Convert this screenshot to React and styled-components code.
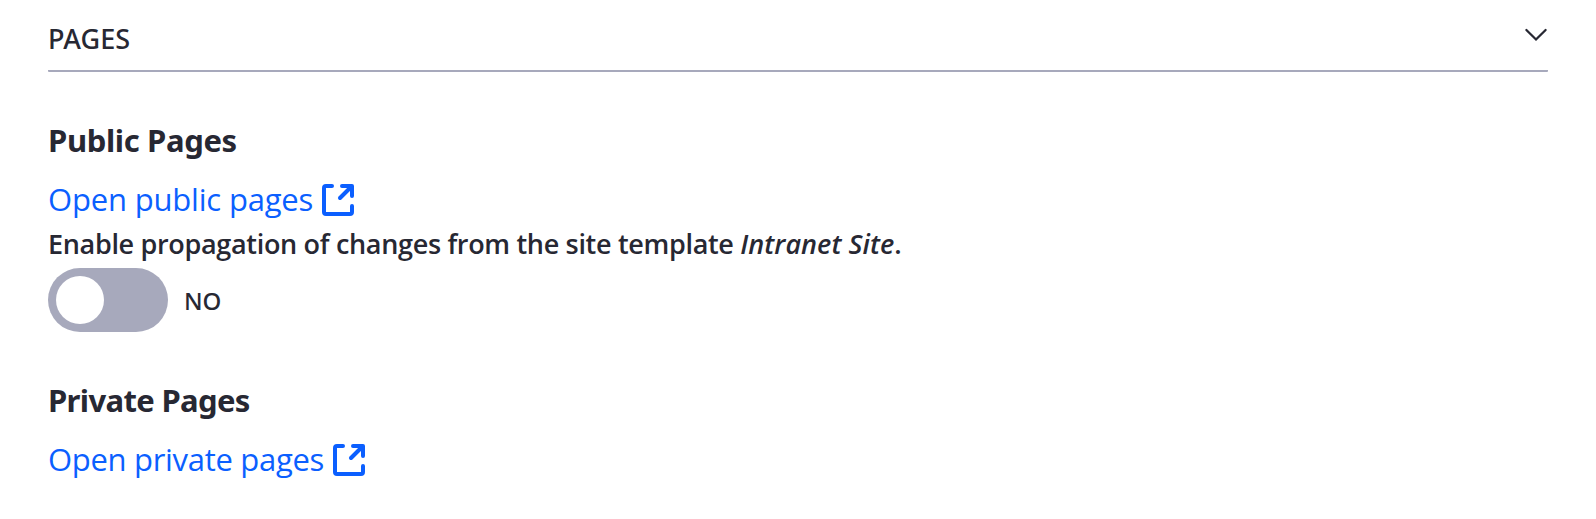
import React from "react";
import styled, { createGlobalStyle } from "styled-components";

const GlobalStyle = createGlobalStyle`
  body {
    margin: 0;
    background: #fff;
    color: #272833;
    font-family: "Noto Sans", "Open Sans", sans-serif;
  }
`;

const Panel = styled.main`
  box-sizing: border-box;
  width: 100%;
  height: 519px;
  padding: 0 48px;
  overflow: hidden;
`;

const PanelHeader = styled.header`
  box-sizing: border-box;
  display: flex;
  align-items: flex-start;
  justify-content: space-between;
  height: 72px;
  padding-top: 18px;
  border-bottom: 2px solid #a7a9bc;
  border-radius: 1px;
`;

const PanelTitle = styled.h2`
  margin: 0;
  font-size: 27px;
  font-weight: 500;
  line-height: 42px;
  letter-spacing: 0.1px;
`;

const ChevronIcon = styled.svg`
  width: 24px;
  height: 16px;
  margin-top: 9px;
`;

const Section = styled.section`
  padding-top: ${(p) => p.$top}px;
`;

const SectionTitle = styled.h3`
  margin: 0 0 12px;
  font-size: 31px;
  font-weight: 700;
  line-height: 48px;
  letter-spacing: ${(p) => p.$tracking}px;
  white-space: nowrap;
`;

const PageLink = styled.a`
  display: flex;
  align-items: center;
  gap: 9px;
  width: max-content;
  height: 48px;
  color: #0b5fff;
  font-family: "Open Sans", "Noto Sans", sans-serif;
  font-size: 31px;
  font-weight: 400;
  letter-spacing: ${(p) => p.$tracking}px;
  text-decoration: none;
`;

const LinkText = styled.span`
  padding-bottom: 2px;
  line-height: 46px;
  white-space: nowrap;
`;

const ShortcutSvg = styled.svg`
  width: 32px;
  height: 32px;
  flex: none;
`;

const FieldLabel = styled.p`
  margin: 0 0 5px;
  font-family: "Open Sans", "Noto Sans", sans-serif;
  font-size: 27px;
  font-weight: 600;
  line-height: 39px;
  letter-spacing: -0.32px;
  white-space: nowrap;

  em {
    letter-spacing: 0.05px;
  }
`;

const ToggleRow = styled.label`
  display: flex;
  align-items: center;
  gap: 16px;
  height: 64px;
`;

const ToggleTrack = styled.span`
  box-sizing: border-box;
  width: 120px;
  height: 64px;
  padding: 8px;
  border-radius: 32px;
  background: #a7a9bc;
`;

const ToggleKnob = styled.span`
  display: block;
  width: 48px;
  height: 48px;
  border-radius: 50%;
  background: #fff;
`;

const ToggleText = styled.span`
  padding-top: 2px;
  font-size: 24px;
  font-weight: 500;
  line-height: 36px;
`;

function ShortcutIcon() {
  return (
    <ShortcutSvg viewBox="0 0 32 32" fill="none" stroke="currentColor" strokeWidth="4" strokeLinecap="round">
      <path d="M10 2H4Q2 2 2 4V28Q2 30 4 30H28Q30 30 30 28V22" />
      <path d="M18 14L28 4" />
      <path
        d="M20 0H30Q32 0 32 2V12Q32 14 30 14Q28 14 28 12V4H20Q18 4 18 2Q18 0 20 0Z"
        fill="currentColor"
        stroke="none"
      />
    </ShortcutSvg>
  );
}

export default function App() {
  return (
    <>
      <GlobalStyle />
      <Panel>
        <PanelHeader>
          <PanelTitle>PAGES</PanelTitle>
          <ChevronIcon viewBox="0 0 24 16" fill="none" stroke="#272833" strokeWidth="2.3" strokeLinecap="round">
            <path d="M2.4 3L12 12.5L21.6 3" />
          </ChevronIcon>
        </PanelHeader>
        <Section $top={44}>
          <SectionTitle $tracking={-0.35}>Public Pages</SectionTitle>
          <PageLink $tracking={-0.18}>
            <LinkText>Open public pages</LinkText>
            <ShortcutIcon />
          </PageLink>
          <FieldLabel>
            Enable propagation of changes from the site template <em>Intranet Site</em>.
          </FieldLabel>
          <ToggleRow>
            <ToggleTrack>
              <ToggleKnob />
            </ToggleTrack>
            <ToggleText>NO</ToggleText>
          </ToggleRow>
        </Section>
        <Section $top={44}>
          <SectionTitle $tracking={-0.65}>Private Pages</SectionTitle>
          <PageLink $tracking={-0.3}>
            <LinkText>Open private pages</LinkText>
            <ShortcutIcon />
          </PageLink>
        </Section>
      </Panel>
    </>
  );
}
